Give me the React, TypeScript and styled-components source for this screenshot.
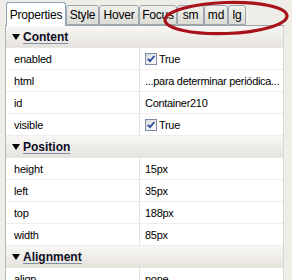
import React from "react";
import styled, { createGlobalStyle } from "styled-components";

const GlobalStyle = createGlobalStyle`
  html, body {
    margin: 0;
    padding: 0;
    background: #efede8;
    font-family: "Liberation Sans", Arial, sans-serif;
    font-size: 11px;
    color: #000;
  }
`;

type Row = { label: string; value: string; checked?: boolean };
type Section = { title: string; rows: Row[] };

const tabs = [
  { label: "Properties", width: 60 },
  { label: "Style", width: 33 },
  { label: "Hover", width: 40 },
  { label: "Focus", width: 38 },
  { label: "sm", width: 27 },
  { label: "md", width: 24 },
  { label: "lg", width: 18 },
];

const sections: Section[] = [
  {
    title: "Content",
    rows: [
      { label: "enabled", value: "True", checked: true },
      { label: "html", value: "...para determinar periódica..." },
      { label: "id", value: "Container210" },
      { label: "visible", value: "True", checked: true },
    ],
  },
  {
    title: "Position",
    rows: [
      { label: "height", value: "15px" },
      { label: "left", value: "35px" },
      { label: "top", value: "188px" },
      { label: "width", value: "85px" },
    ],
  },
  {
    title: "Alignment",
    rows: [{ label: "align", value: "none" }],
  },
];

const Checkbox = () => (
  <svg width="12" height="12" viewBox="0 0 12 12">
    <defs>
      <linearGradient id="cb" x1="0" y1="0" x2="1" y2="1">
        <stop offset="0" stopColor="#d8d8d4" />
        <stop offset="1" stopColor="#ffffff" />
      </linearGradient>
    </defs>
    <rect x="0.5" y="0.5" width="11" height="11" fill="url(#cb)" stroke="#7b8ea6" />
    <path d="M2.8 5.8 L5 8.2 L9.4 3" fill="none" stroke="#2b47a8" strokeWidth="1.8" />
  </svg>
);

const App: React.FC = () => {
  return (
    <Page>
      <GlobalStyle />
      <TabBar>
        {tabs.map((t, i) => (
          <Tab key={t.label} $active={i === 0} $w={t.width}>
            {t.label}
          </Tab>
        ))}
      </TabBar>
      <Panel>
        {sections.map((s) => (
          <React.Fragment key={s.title}>
            <Header>
              <Arrow />
              <HeaderTitle>{s.title}</HeaderTitle>
            </Header>
            {s.rows.map((r) => (
              <PropRow key={r.label}>
                <Label>{r.label}</Label>
                <Value>
                  {r.checked && <Checkbox />}
                  {r.value}
                </Value>
              </PropRow>
            ))}
          </React.Fragment>
        ))}
      </Panel>
      <Mark width="128" height="36" viewBox="0 0 128 36">
        <ellipse
          cx="64"
          cy="18"
          rx="61"
          ry="15.5"
          fill="none"
          stroke="#a8121a"
          strokeWidth="3.2"
          transform="rotate(-2 64 18)"
        />
      </Mark>
    </Page>
  );
};

const Page = styled.div`
  position: relative;
  height: 280px;
  overflow: hidden;
  padding: 2px 8px 0 5px;
`;

const TabBar = styled.div`
  display: flex;
  align-items: flex-end;
  height: 23px;
  padding-left: 1px;
  border-bottom: 1px solid #9aa3a8;
`;

const Tab = styled.div<{ $active?: boolean; $w: number }>`
  box-sizing: border-box;
  width: ${(p) => p.$w}px;
  height: ${(p) => (p.$active ? 24 : 20)}px;
  margin-bottom: ${(p) => (p.$active ? -1 : 0)}px;
  display: flex;
  align-items: center;
  justify-content: center;
  font-size: 12px;
  letter-spacing: -0.2px;
  border: 1px solid ${(p) => (p.$active ? "#8aa4c0" : "#9ea7ad")};
  border-bottom: ${(p) => (p.$active ? "none" : "1px solid #9ea7ad")};
  border-radius: 3px 3px 0 0;
  background: ${(p) =>
    p.$active ? "#ffffff" : "linear-gradient(#f0f0ec, #dcdcd6)"};
  padding-top: ${(p) => (p.$active ? 1 : 0)}px;
`;

const Panel = styled.div`
  background: #fff;
  border-left: 1px solid #b8b6b0;
  border-right: 1px solid #d8d6d0;
`;

const Header = styled.div`
  box-sizing: border-box;
  height: 22px;
  display: flex;
  align-items: center;
  padding-left: 6px;
  gap: 3px;
  background: linear-gradient(#f8f7f5, #e6e3de);
  border-bottom: 1px solid #e8e6e2;
`;

const Arrow = styled.span`
  width: 0;
  height: 0;
  border-left: 4.5px solid transparent;
  border-right: 4.5px solid transparent;
  border-top: 6px solid #000;
`;

const HeaderTitle = styled.span`
  font-size: 12px;
  font-weight: bold;
  color: #0c0c24;
  text-decoration: underline;
  text-decoration-color: #8090a8;
  text-underline-offset: 2px;
`;

const PropRow = styled.div`
  box-sizing: border-box;
  height: 22px;
  display: grid;
  grid-template-columns: 134px 1fr;
  border-bottom: 1px solid #ededeb;
`;

const Label = styled.div`
  display: flex;
  align-items: center;
  padding-left: 8px;
  border-right: 1px solid #e2e2e0;
  letter-spacing: -0.2px;
`;

const Value = styled.div`
  display: flex;
  align-items: center;
  gap: 2px;
  padding-left: 5px;
  white-space: nowrap;
  overflow: hidden;
  letter-spacing: -0.3px;
`;

const Mark = styled.svg`
  position: absolute;
  left: 162px;
  top: 0;
`;

export default App;
